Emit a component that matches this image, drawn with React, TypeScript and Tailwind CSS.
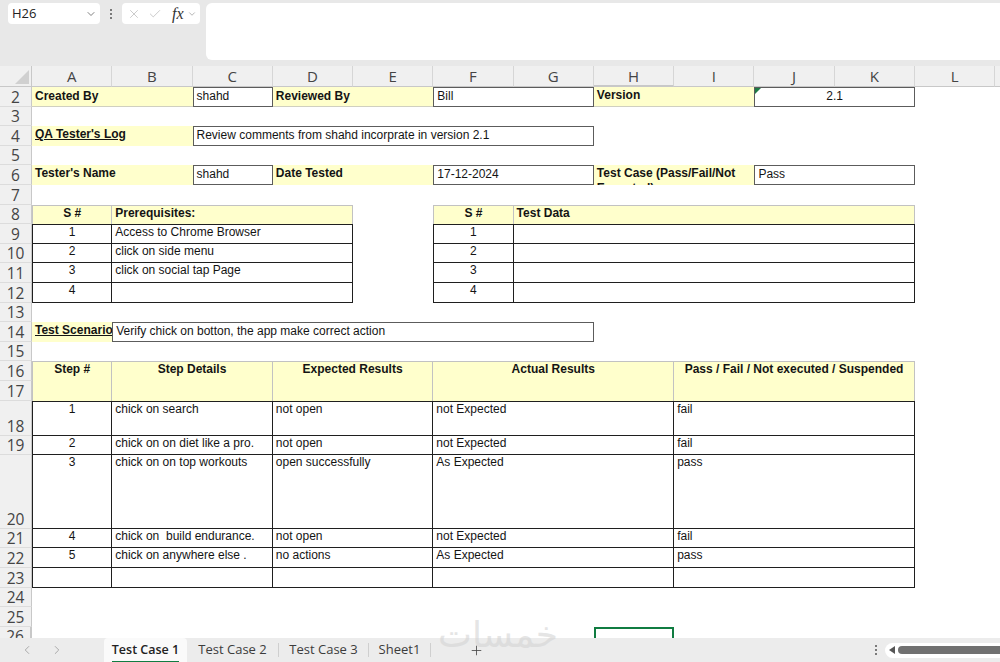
import React from "react";
import { ChevronDown, ChevronLeft, ChevronRight, Plus, X, Check } from "lucide-react";

const Y = "bg-[#ffffcc]";
const BOX = "border border-[#5c5c5c] bg-white pt-[1px]";
const HDR = "bg-[#ffffcc] font-bold border-t border-r border-[#c2c2c2] pt-0";
const DAT = "border-r border-b border-[#1f1f1f] pt-0";

function Cell({ c, children }: { c: string; children?: React.ReactNode }) {
  return (
    <div
      className={`relative overflow-hidden whitespace-pre px-[3px] text-[12px] leading-[14px] text-[#141414] ${c}`}
    >
      {children}
    </div>
  );
}

const colHeads: { l: string; c: string }[] = [
  { l: "A", c: "" },
  { l: "B", c: "" },
  { l: "C", c: "" },
  { l: "D", c: "" },
  { l: "E", c: "" },
  { l: "F", c: "" },
  { l: "G", c: "" },
  { l: "H", c: "bg-[#dedede] text-[#0f6e3a] border-b-2 border-b-[#107c41]" },
  { l: "I", c: "" },
  { l: "J", c: "" },
  { l: "K", c: "" },
  { l: "L", c: "" },
  { l: "", c: "" },
];

const rowHeads: { n: string; r: string }[] = [
  { n: "2", r: "row-start-2" },
  { n: "3", r: "row-start-3" },
  { n: "4", r: "row-start-4" },
  { n: "5", r: "row-start-5" },
  { n: "6", r: "row-start-6" },
  { n: "7", r: "row-start-7" },
  { n: "8", r: "row-start-8" },
  { n: "9", r: "row-start-9" },
  { n: "10", r: "row-start-10" },
  { n: "11", r: "row-start-11" },
  { n: "12", r: "row-start-12" },
  { n: "13", r: "row-start-13" },
  { n: "14", r: "row-start-14" },
  { n: "15", r: "row-start-15" },
  { n: "16", r: "row-start-16" },
  { n: "17", r: "row-start-17" },
  { n: "18", r: "row-start-18" },
  { n: "19", r: "row-start-19" },
  { n: "20", r: "row-start-20" },
  { n: "21", r: "row-start-21" },
  { n: "22", r: "row-start-22" },
  { n: "23", r: "row-start-23" },
  { n: "24", r: "row-start-24" },
  { n: "25", r: "row-start-25" },
  { n: "26", r: "row-start-26 text-[#107c41] border-r-2 border-r-[#107c41]" },
];

const prereq = [
  { r: "row-start-9", n: "1", t: "Access to Chrome Browser", first: "border-t" },
  { r: "row-start-10", n: "2", t: "click on side menu", first: "" },
  { r: "row-start-11", n: "3", t: "click on social tap Page", first: "" },
  { r: "row-start-12", n: "4", t: "", first: "" },
];

const steps = [
  { r: "row-start-18", n: "1", d: "chick on search", e: "not open", a: "not Expected", p: "fail", first: "border-t" },
  { r: "row-start-19", n: "2", d: "chick on on diet like a pro.", e: "not open", a: "not Expected", p: "fail", first: "" },
  { r: "row-start-20", n: "3", d: "chick on on top workouts", e: "open successfully", a: "As Expected", p: "pass", first: "" },
  { r: "row-start-21", n: "4", d: "chick on  build endurance.", e: "not open", a: "not Expected", p: "fail", first: "" },
  { r: "row-start-22", n: "5", d: "chick on anywhere else .", e: "no actions", a: "As Expected", p: "pass", first: "" },
  { r: "row-start-23", n: "", d: "", e: "", a: "", p: "", first: "" },
];

function Dots() {
  return (
    <div className="flex flex-col items-center gap-[2px]">
      <span className="h-[2px] w-[2px] rounded-full bg-[#555]" />
      <span className="h-[2px] w-[2px] rounded-full bg-[#555]" />
      <span className="h-[2px] w-[2px] rounded-full bg-[#555]" />
    </div>
  );
}

function Toolbar() {
  return (
    <div className="flex h-[66px] shrink-0 items-start bg-[#e8e8e8] pt-[3px]">
      <div className="ml-[8px] flex h-[21px] w-[92px] items-center justify-between rounded-[4px] bg-white pl-[4px] pr-[3px] font-['Open_Sans',sans-serif] text-[13px] text-[#222]">
        <span>H26</span>
        <ChevronDown size={12} strokeWidth={1.5} color="#555" />
      </div>
      <div className="flex h-[21px] w-[22px] items-center justify-center">
        <Dots />
      </div>
      <div className="flex h-[21px] w-[78px] items-center rounded-[4px] bg-white pl-[5px]">
        <X size={14} strokeWidth={1.2} color="#b4b4b4" />
        <span className="w-[7px]" />
        <Check size={14} strokeWidth={1.2} color="#b4b4b4" />
        <span className="ml-[10px] font-['Liberation_Serif',serif] text-[16px] italic leading-[16px] text-[#333]">fx</span>
        <span className="ml-[3px]">
          <ChevronDown size={10} strokeWidth={1.5} color="#8a8a8a" />
        </span>
      </div>
      <div className="ml-[6px] h-[57px] flex-1 rounded-tl-[6px] rounded-bl-[6px] bg-white" />
    </div>
  );
}

function Sheet() {
  return (
    <div className="relative flex-1 overflow-hidden bg-white">
      <div className="grid grid-cols-[32px_repeat(13,80.27px)] grid-rows-[21px_repeat(16,19.6px)_35.4px_19.6px_73.4px_repeat(6,19.6px)]">
        <div className="relative col-start-1 row-start-1 border-b border-r border-[#c8c8c8] bg-[#f0f0f0]">
          <svg className="absolute bottom-[2px] right-[2px]" width="14" height="14" viewBox="0 0 14 14">
            <polygon points="14,0 14,14 0,14" fill="#d0d0d0" />
          </svg>
        </div>
        {colHeads.map((h, i) => (
          <div
            key={i}
            className={`row-start-1 flex items-center justify-center border-b border-r border-[#d6d6d6] border-b-[#c8c8c8] bg-[#f0f0f0] font-['Open_Sans',sans-serif] text-[15px] leading-[18px] text-[#444] ${h.c}`}
          >
            {h.l}
          </div>
        ))}
        {rowHeads.map((h) => (
          <div
            key={h.n}
            className={`col-start-1 flex items-end justify-center border-b border-r border-[#dcdcdc] border-r-[#c8c8c8] bg-[#f0f0f0] pb-[1px] font-['Open_Sans',sans-serif] text-[15.5px] leading-[16px] text-[#444] ${h.r}`}
          >
            {h.n}
          </div>
        ))}

        {/* Row 2 */}
        <Cell c={`col-start-2 col-span-2 row-start-2 ${Y} pt-[2px] font-bold border-b border-[#d0d0c0]`}>Created By</Cell>
        <Cell c={`col-start-4 row-start-2 ${BOX}`}>shahd</Cell>
        <Cell c={`col-start-5 col-span-2 row-start-2 ${Y} pt-[2px] font-bold border-b border-[#d0d0c0]`}>Reviewed By</Cell>
        <Cell c={`col-start-7 col-span-2 row-start-2 ${BOX}`}>Bill</Cell>
        <Cell c={`col-start-9 col-span-2 row-start-2 ${Y} pt-[1px] font-bold border-b border-[#d0d0c0]`}>Version</Cell>
        <Cell c={`col-start-11 col-span-2 row-start-2 ${BOX} text-center`}>
          <svg className="absolute left-0 top-0" width="6" height="6" viewBox="0 0 6 6">
            <polygon points="0,0 6,0 0,6" fill="#1e7a45" />
          </svg>
          2.1
        </Cell>

        {/* Row 4 */}
        <Cell c={`col-start-2 col-span-2 row-start-4 ${Y} pt-[1px] font-bold underline`}>QA Tester's Log</Cell>
        <Cell c={`col-start-4 col-span-5 row-start-4 ${BOX}`}>Review comments from shahd incorprate in version 2.1</Cell>

        {/* Row 6 */}
        <Cell c={`col-start-2 col-span-2 row-start-6 ${Y} pt-[1px] font-bold`}>Tester's Name</Cell>
        <Cell c={`col-start-4 row-start-6 ${BOX}`}>shahd</Cell>
        <Cell c={`col-start-5 col-span-2 row-start-6 ${Y} pt-[1px] font-bold`}>Date Tested</Cell>
        <Cell c={`col-start-7 col-span-2 row-start-6 ${BOX}`}>17-12-2024</Cell>
        <div className={`col-start-9 col-span-2 row-start-6 overflow-hidden px-[3px] pt-[1px] text-[12px] leading-[14.5px] text-[#141414] ${Y} font-bold`}>
          Test Case (Pass/Fail/Not Executed)
        </div>
        <Cell c={`col-start-11 col-span-2 row-start-6 ${BOX}`}>Pass</Cell>

        {/* Row 8 headers */}
        <Cell c={`col-start-2 row-start-8 ${HDR} border-l text-center`}>S #</Cell>
        <Cell c={`col-start-3 col-span-3 row-start-8 ${HDR}`}>Prerequisites:</Cell>
        <Cell c={`col-start-7 row-start-8 ${HDR} border-l text-center`}>S #</Cell>
        <Cell c={`col-start-8 col-span-5 row-start-8 ${HDR}`}>Test Data</Cell>

        {prereq.map((p) => (
          <React.Fragment key={p.r}>
            <Cell c={`col-start-2 ${p.r} ${DAT} ${p.first} border-l text-center`}>{p.n}</Cell>
            <Cell c={`col-start-3 col-span-3 ${p.r} ${DAT} ${p.first}`}>{p.t}</Cell>
            <Cell c={`col-start-7 ${p.r} ${DAT} ${p.first} border-l text-center`}>{p.n}</Cell>
            <Cell c={`col-start-8 col-span-5 ${p.r} ${DAT} ${p.first}`}> </Cell>
          </React.Fragment>
        ))}

        {/* Row 14 */}
        <Cell c={`col-start-2 row-start-14 ${Y} pt-[1px] font-bold underline`}>Test Scenario</Cell>
        <Cell c={`col-start-3 col-span-6 row-start-14 ${BOX}`}>Verify chick on botton, the app make correct action</Cell>

        {/* Rows 16-17 header */}
        <Cell c={`col-start-2 row-start-16 row-span-2 ${HDR} border-l text-center`}>Step #</Cell>
        <Cell c={`col-start-3 col-span-2 row-start-16 row-span-2 ${HDR} text-center`}>Step Details</Cell>
        <Cell c={`col-start-5 col-span-2 row-start-16 row-span-2 ${HDR} text-center`}>Expected Results</Cell>
        <Cell c={`col-start-7 col-span-3 row-start-16 row-span-2 ${HDR} text-center`}>Actual Results</Cell>
        <Cell c={`col-start-10 col-span-3 row-start-16 row-span-2 ${HDR} text-center`}>Pass / Fail / Not executed / Suspended</Cell>

        {steps.map((s) => (
          <React.Fragment key={s.r}>
            <Cell c={`col-start-2 ${s.r} ${DAT} ${s.first} border-l text-center`}>{s.n}</Cell>
            <Cell c={`col-start-3 col-span-2 ${s.r} ${DAT} ${s.first}`}>{s.d}</Cell>
            <Cell c={`col-start-5 col-span-2 ${s.r} ${DAT} ${s.first}`}>{s.e}</Cell>
            <Cell c={`col-start-7 col-span-3 ${s.r} ${DAT} ${s.first}`}>{s.a}</Cell>
            <Cell c={`col-start-10 col-span-3 ${s.r} ${DAT} ${s.first}`}>{s.p}</Cell>
          </React.Fragment>
        ))}

        <div className="col-start-9 row-start-26 border-2 border-[#107c41]" />
      </div>
    </div>
  );
}

function Tabs() {
  return (
    <div className="flex h-[24px] shrink-0 items-stretch bg-[#ececec] font-['Open_Sans',sans-serif] text-[13px] text-[#3c3c3c]">
      <div className="flex w-[104px] items-center pl-[20px]">
        <ChevronLeft size={14} strokeWidth={1.5} color="#a0a0a0" />
        <span className="w-[16px]" />
        <ChevronRight size={14} strokeWidth={1.5} color="#a0a0a0" />
      </div>
      <div className="relative flex w-[83px] items-center justify-center rounded-t-[4px] bg-[#fafafa] text-[12.5px] font-semibold text-[#222]">
        <span className="relative">
          Test Case 1
          <span className="absolute bottom-[-4px] left-0 right-0 h-[2px] bg-[#107c41]" />
        </span>
      </div>
      <div className="my-[5px] flex w-[92px] items-center justify-center border-r border-[#cfcfcf]">Test Case 2</div>
      <div className="my-[5px] flex w-[90px] items-center justify-center border-r border-[#cfcfcf]">Test Case 3</div>
      <div className="my-[5px] flex w-[62px] items-center justify-center border-r border-[#cfcfcf]">Sheet1</div>
      <div className="flex w-[90px] items-center justify-center">
        <Plus size={15} strokeWidth={1.3} color="#444" />
      </div>
      <div className="flex-1" />
      <div className="flex w-[18px] items-center justify-center">
        <Dots />
      </div>
      <div className="flex w-[115px] items-center py-[4px]">
        <div className="flex h-[15px] flex-1 items-center rounded-l-full bg-white pl-[4px]">
          <svg width="6" height="8" viewBox="0 0 6 8">
            <polygon points="6,0 6,8 0,4" fill="#555" />
          </svg>
          <div className="ml-[3px] h-[8px] flex-1 rounded-l-full bg-[#707070]" />
        </div>
      </div>
    </div>
  );
}

export default function App() {
  return (
    <div className="relative flex h-[662px] w-[1000px] flex-col overflow-hidden bg-white font-['Liberation_Sans',Arial,sans-serif]">
      <Toolbar />
      <Sheet />
      <Tabs />
      <div className="pointer-events-none absolute left-[438px] top-[608px] font-['DejaVu_Sans',sans-serif] text-[36px] text-[#d4d4d4] opacity-60">
        خمسات
      </div>
    </div>
  );
}
